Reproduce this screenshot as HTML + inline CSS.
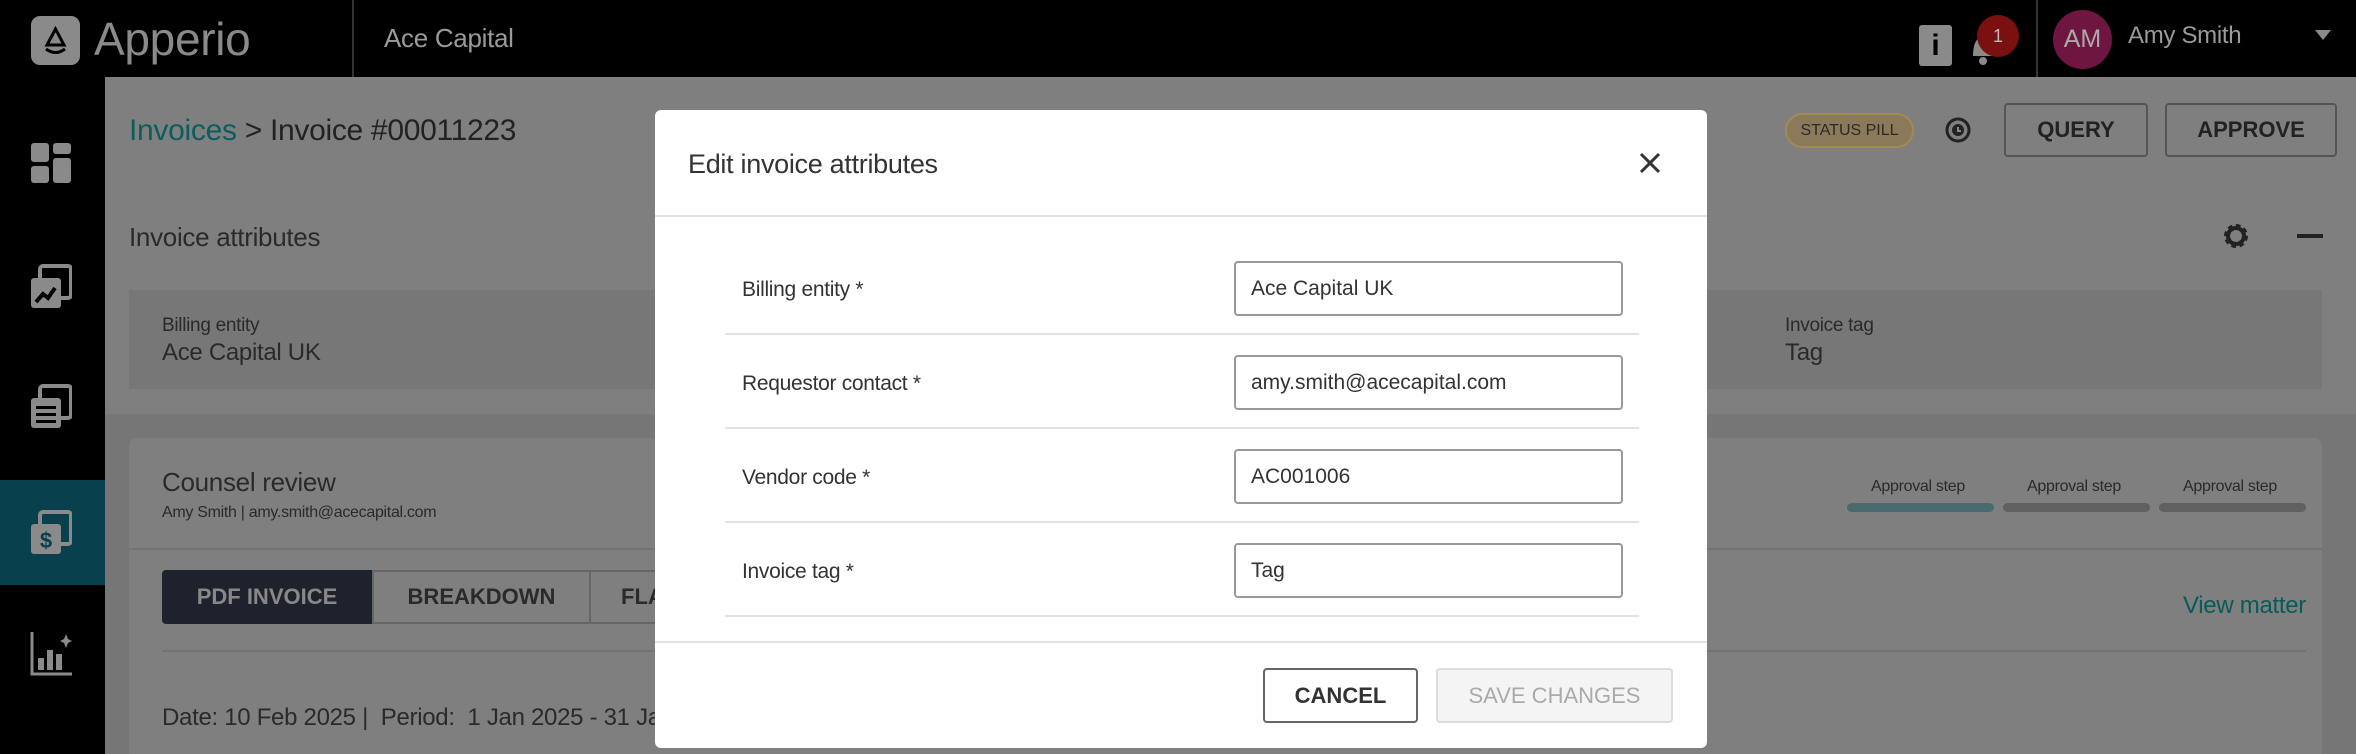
<!DOCTYPE html>
<html><head><meta charset="utf-8"><style>
*{box-sizing:border-box;margin:0;padding:0}
body{width:2356px;height:754px;overflow:hidden;background:#7f7f7f;font-family:"Liberation Sans",sans-serif;position:relative}
.a{position:absolute}
.top{left:0;top:0;width:2356px;height:77px;background:#000}
.side{left:0;top:77px;width:105px;height:677px;background:#000}
.t{white-space:nowrap;letter-spacing:-0.3px}
.btn{border:2px solid #555;border-radius:4px;display:flex;align-items:center;justify-content:center;font-weight:bold;color:#222;font-size:22px}
.lbl{font-size:21px;color:#333}
.inp{left:579px;width:389px;height:55px;border:2px solid #999;border-radius:4px;font-size:21px;color:#333;padding-left:15px;display:flex;align-items:center;background:#fff}
.row{left:70px;width:914px;height:2px;background:#e3e3e3}
</style></head><body>
<div class="a top"></div>
<div class="a" style="left:31px;top:16px;width:49px;height:66px;height:49px;background:#8a8a8a;border-radius:9px"></div>
<svg class="a" style="left:31px;top:16px" width="49" height="49"><path d="M24.5 13 L16 29 H33 Z" fill="none" stroke="#000" stroke-width="3"/><path d="M15 33 Q24.5 40 34 33" fill="none" stroke="#000" stroke-width="3"/></svg>
<div class="a t" style="left:94px;top:12px;font-size:46px;color:#8a8a8a">Apperio</div>
<div class="a" style="left:352px;top:0;width:2px;height:77px;background:#333"></div>
<div class="a t" style="left:384px;top:23px;font-size:26px;color:#9a9a9a">Ace Capital</div>
<div class="a" style="left:1919px;top:25px;width:33px;height:41px;background:#8a8a8a;border-radius:3px;color:#000;font-weight:bold;font-size:30px;text-align:center;line-height:41px">i</div>
<svg class="a" style="left:1968px;top:28px" width="30" height="40"><path d="M5 28 Q5 10 15 8 Q25 10 25 28 Z" fill="#8a8a8a"/><circle cx="15" cy="33" r="4" fill="#8a8a8a"/></svg>
<div class="a" style="left:1977px;top:15px;width:42px;height:42px;border-radius:21px;background:#7a1010;color:#bbb;font-size:18px;text-align:center;line-height:42px">1</div>
<div class="a" style="left:2036px;top:0;width:2px;height:77px;background:#333"></div>
<div class="a" style="left:2053px;top:10px;width:59px;height:59px;border-radius:50%;background:#6e1640;color:#aaa;font-size:25px;text-align:center;line-height:59px">AM</div>
<div class="a t" style="left:2128px;top:22px;font-size:24px;color:#9a9a9a">Amy Smith</div>
<svg class="a" style="left:2315px;top:30px" width="16" height="12"><path d="M0 0H16L8 10Z" fill="#8a8a8a"/></svg>
<div class="a side"></div>
<div class="a" style="left:0;top:480px;width:105px;height:105px;background:#08404d"></div>
<svg class="a" style="left:30px;top:140px" width="42" height="350" fill="#8a8a8a">
<rect x="1" y="3" width="18" height="19" rx="3"/><rect x="23" y="3" width="18" height="11" rx="3"/><rect x="1" y="26" width="18" height="17" rx="3"/><rect x="23" y="18" width="18" height="25" rx="3"/>
<g transform="translate(0,126)"><rect x="10" y="0" width="31" height="32" rx="3" fill="none" stroke="#8a8a8a" stroke-width="4"/><rect x="1" y="12" width="30" height="30" rx="3"/><path d="M6 36 L13 28 L18 32 L25 22" stroke="#000" stroke-width="4" fill="none"/></g>
<g transform="translate(0,246)"><rect x="10" y="0" width="31" height="32" rx="3" fill="none" stroke="#8a8a8a" stroke-width="4"/><rect x="1" y="12" width="30" height="30" rx="3"/><rect x="6" y="20" width="20" height="3" fill="#000"/><rect x="6" y="27" width="20" height="3" fill="#000"/><rect x="6" y="34" width="20" height="3" fill="#000"/></g>
</svg>
<svg class="a" style="left:30px;top:510px" width="42" height="50" fill="#8a8a8a"><rect x="10" y="2" width="31" height="32" rx="3" fill="none" stroke="#8a8a8a" stroke-width="4"/><rect x="1" y="14" width="30" height="30" rx="3"/><text x="16" y="38" font-size="22" font-weight="bold" fill="#08404d" text-anchor="middle" font-family="Liberation Sans">$</text></svg>
<svg class="a" style="left:30px;top:630px" width="42" height="50" fill="#8a8a8a"><path d="M2 2V44H42" stroke="#8a8a8a" stroke-width="3" fill="none"/><rect x="8" y="28" width="6" height="12"/><rect x="17" y="20" width="6" height="20"/><rect x="26" y="24" width="6" height="16"/><path d="M36 4L38 9L42 11L38 13L36 18L34 13L30 11L34 9Z"/></svg>

<div class="a t" style="left:129px;top:114px;font-size:30px;color:#222"><span style="color:#0a5e5e">Invoices</span> &gt; Invoice #00011223</div>
<div class="a" style="left:1785px;top:113px;width:129px;height:35px;border-radius:18px;background:#8a7a5a;border:2px solid #a08a58;font-size:16px;color:#2a2a2a;text-align:center;line-height:31px">STATUS PILL</div>
<svg class="a" style="left:1944px;top:116px" width="28" height="28"><circle cx="14" cy="14" r="11" fill="none" stroke="#222" stroke-width="3"/><circle cx="14" cy="14" r="6" fill="#222"/><path d="M14 11V15H17" stroke="#888" stroke-width="2" fill="none"/></svg>
<div class="a btn" style="left:2004px;top:103px;width:144px;height:54px">QUERY</div>
<div class="a btn" style="left:2165px;top:103px;width:172px;height:54px">APPROVE</div>
<div class="a t" style="left:129px;top:222px;font-size:26px;color:#2a2a2a">Invoice attributes</div>
<svg class="a" style="left:2222px;top:222px" width="28" height="28"><circle cx="14" cy="14" r="9" fill="none" stroke="#222" stroke-width="6" stroke-dasharray="4 3"/><circle cx="14" cy="14" r="8" fill="none" stroke="#222" stroke-width="4"/></svg>
<div class="a" style="left:2297px;top:234px;width:26px;height:4px;background:#222"></div>
<div class="a" style="left:129px;top:290px;width:2193px;height:99px;background:#777"></div>
<div class="a t" style="left:162px;top:315px;font-size:19px;color:#2a2a2a">Billing entity</div>
<div class="a t" style="left:162px;top:339px;font-size:24px;color:#2a2a2a">Ace Capital UK</div>
<div class="a t" style="left:1785px;top:315px;font-size:19px;color:#2a2a2a">Invoice tag</div>
<div class="a t" style="left:1785px;top:339px;font-size:24px;color:#2a2a2a">Tag</div>
<div class="a" style="left:105px;top:414px;width:2251px;height:340px;background:#767676"></div>
<div class="a" style="left:129px;top:438px;width:2193px;height:316px;background:#7f7f7f;border-radius:8px 8px 0 0"></div>
<div class="a t" style="left:162px;top:467px;font-size:26px;color:#2a2a2a">Counsel review</div>
<div class="a t" style="left:162px;top:504px;font-size:16px;color:#2a2a2a">Amy Smith | amy.smith@acecapital.com</div>
<div class="a t" style="left:1871px;top:478px;font-size:16px;color:#2a2a2a">Approval step</div>
<div class="a t" style="left:2027px;top:478px;font-size:16px;color:#2a2a2a">Approval step</div>
<div class="a t" style="left:2183px;top:478px;font-size:16px;color:#2a2a2a">Approval step</div>
<div class="a" style="left:1847px;top:503px;width:147px;height:9px;border-radius:5px;background:#4a6a70"></div>
<div class="a" style="left:2003px;top:503px;width:147px;height:9px;border-radius:5px;background:#606060"></div>
<div class="a" style="left:2159px;top:503px;width:147px;height:9px;border-radius:5px;background:#606060"></div>
<div class="a" style="left:129px;top:548px;width:2193px;height:2px;background:#737373"></div>
<div class="a" style="left:162px;top:570px;width:210px;height:54px;background:#1e222c;border-radius:4px 0 0 4px;color:#888;font-size:22px;font-weight:bold;display:flex;align-items:center;justify-content:center">PDF INVOICE</div>
<div class="a btn" style="left:372px;top:570px;width:219px;height:54px;border-radius:0;border-color:#666;color:#2a2a2a">BREAKDOWN</div>
<div class="a btn" style="left:589px;top:570px;width:100px;height:54px;border-radius:0;border-color:#666;color:#2a2a2a;justify-content:flex-start;padding-left:30px">FLAGS</div>
<div class="a t" style="left:2183px;top:592px;font-size:24px;color:#0a5a5a">View matter</div>
<div class="a" style="left:162px;top:650px;width:2144px;height:2px;background:#737373"></div>
<div class="a t" style="left:162px;top:704px;font-size:24px;color:#2a2a2a">Date: 10 Feb 2025 |&nbsp; Period:&nbsp; 1 Jan 2025 - 31 Jan 2025</div>

<div class="a" style="left:655px;top:110px;width:1052px;height:638px;background:#fff;border-radius:6px">
 <div class="a t" style="left:33px;top:39px;font-size:27px;color:#333">Edit invoice attributes</div>
 <svg class="a" style="left:984px;top:42px" width="22" height="22"><path d="M2 2L20 20M20 2L2 20" stroke="#333" stroke-width="3"/></svg>
 <div class="a" style="left:0;top:105px;width:1052px;height:2px;background:#e3e3e3"></div>
 <div class="a lbl t" style="left:87px;top:168px">Billing entity *</div>
 <div class="a inp" style="top:151px">Ace Capital UK</div>
 <div class="a row" style="top:223px"></div>
 <div class="a lbl t" style="left:87px;top:262px">Requestor contact *</div>
 <div class="a inp" style="top:245px">amy.smith@acecapital.com</div>
 <div class="a row" style="top:317px"></div>
 <div class="a lbl t" style="left:87px;top:356px">Vendor code *</div>
 <div class="a inp" style="top:339px">AC001006</div>
 <div class="a row" style="top:411px"></div>
 <div class="a lbl t" style="left:87px;top:450px">Invoice tag *</div>
 <div class="a inp" style="top:433px">Tag</div>
 <div class="a row" style="top:505px"></div>
 <div class="a" style="left:0;top:531px;width:1052px;height:2px;background:#e3e3e3"></div>
 <div class="a btn" style="left:608px;top:558px;width:155px;height:55px;border-color:#666;color:#333">CANCEL</div>
 <div class="a btn" style="left:781px;top:558px;width:237px;height:55px;border-color:#ddd;background:#f4f4f4;color:#aaa;font-weight:normal">SAVE CHANGES</div>
</div>
</body></html>
